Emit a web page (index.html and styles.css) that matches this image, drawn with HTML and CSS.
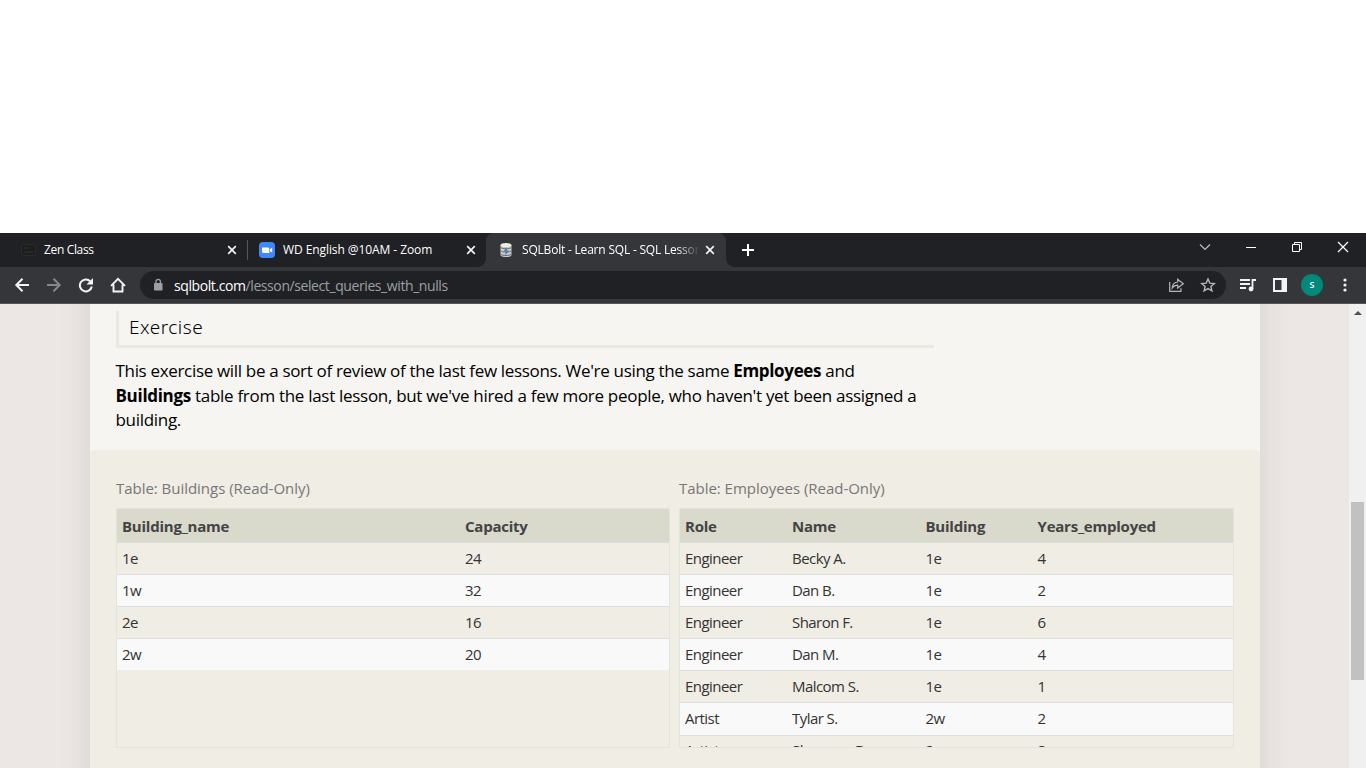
FILE: index.html
```html
<!DOCTYPE html>
<html lang="en">
<head>
<meta charset="utf-8">
<title>SQLBolt - Learn SQL</title>
<link rel="stylesheet" href="styles.css">
</head>
<body>
<div class="blank"></div>
<div class="tabstrip">
  <div class="tab tab-zen">
    <svg class="favicon" width="16" height="16" viewBox="0 0 16 16"><rect x=".5" y="2.500" width="14" height="11" rx="1" fill="#1e1e1f" stroke="#2b2b2c"/><path d="M3 6h5M3 10h9" stroke="#303031"/></svg>
    <span class="tab-title t-zen">Zen Class</span>
    <svg class="close" width="10" height="10" viewBox="0 0 10 10"><path d="M1.200 1.200l7.600 7.600M8.800 1.200l-7.600 7.600"/></svg>
  </div>
  <i class="divider"></i>
  <div class="tab tab-zoom">
    <svg class="favicon" width="16" height="16" viewBox="0 0 16 16"><rect width="16" height="16" rx="4" fill="#4087fc"/><path d="M3 5.500h6a1.500 1.500 0 0 1 1.300 1.500v4H4.500A1.500 1.500 0 0 1 3 9.500zM11 7.200l2.200-1.600v5L11 9.200z" fill="#fff"/></svg>
    <span class="tab-title t-zoom">WD English @10AM - Zoom</span>
    <svg class="close" width="10" height="10" viewBox="0 0 10 10"><path d="M1.200 1.200l7.600 7.600M8.800 1.200l-7.600 7.600"/></svg>
  </div>
  <div class="tab tab-sql">
    <svg class="favicon" width="14" height="16" viewBox="0 0 14 16"><path d="M1.500 3v10c0 2.800 11 2.800 11 0V3" fill="#c9c9c5"/><ellipse cx="7" cy="3" rx="5.500" ry="2" fill="#efede1"/><path d="M1.500 5.200c1 2 10 2 11 0M1.500 8.600c1 2 10 2 11 0M1.500 12c1 2 10 2 11 0" fill="none" stroke="#6b6d70" stroke-width="1"/><path d="M8 5L4.500 9.500H7L6 13.500 10 8.500H7.500z" fill="#4279b8"/></svg>
    <span class="tab-title t-sql">SQLBolt - Learn SQL - SQL Lesson</span>
    <svg class="close" width="10" height="10" viewBox="0 0 10 10"><path d="M1.200 1.200l7.600 7.600M8.800 1.200l-7.600 7.600"/></svg>
  </div>
  <svg class="plus" width="12" height="12" viewBox="0 0 12 12"><path d="M6 0v12M0 6h12" stroke="#fff" stroke-width="2"/></svg>
  <svg class="winctl" width="152" height="14" viewBox="0 0 152 14" fill="none" stroke="#fff"><path d="M1 4.500l5 5 5-5" stroke="#bdbdbd" stroke-width="1.200"/><path d="M47 7.500h10"/><path d="M93.500 4.500h7v7h-7zM95.500 4V2.500h7v7H101"/><path d="M139 2l10 10M149 2l-10 10" stroke-width="1.200"/></svg>
</div>
<div class="toolbar">
  <svg class="nav" width="112" height="16" viewBox="0 0 112 16" fill="none" stroke="#f1f3f4" stroke-width="2"><path d="M15 8H2.500M8.500 1.800L2.300 8l6.200 6.200"/><path d="M33 8h12.500M39.500 1.800L45.700 8l-6.200 6.200" stroke="#85878b"/><path d="M76.200 4.200A6 6 0 1 0 77.800 9.500"/><path d="M79 1v6.500h-6.500z" fill="#f1f3f4" stroke="none"/><path d="M97 8.800L104 1.800l7 7M99.500 7.500V14.500h9V7.500" stroke-width="1.900"/></svg>
  <div class="address">
    <svg width="10" height="14" viewBox="0 0 10 14"><rect x="1" y="5" width="8.500" height="7.500" rx=".8" fill="#9aa0a6"/><path d="M3 5.500V3.500a2.200 2.200 0 0 1 4.400 0v2" fill="none" stroke="#9aa0a6" stroke-width="1.300"/></svg>
    <span class="url"><b>sqlbolt.com</b>/lesson/select_queries_with_nulls</span>
    <svg class="share" width="48" height="16" viewBox="0 0 48 16" fill="none" stroke="#b4b7b9" stroke-width="1.200"><path d="M1.700 5v9.300h11.200v-3"/><path d="M4.200 11c.3-4 2-5.700 5.500-6V2.200L15.300 6.700l-5.600 4.300V8.200c-2.500 0-4.100.8-5.500 2.800z"/><path d="M40 2l1.800 4.100 4.500.4-3.400 3 1 4.400L40 11.600l-3.900 2.300 1-4.400-3.400-3 4.500-.4z" stroke-width="1.400"/></svg>
  </div>
  <svg class="media" width="16" height="16" viewBox="0 0 16 16"><path d="M0 3h10M0 7h10M0 11h6" stroke="#f1f3f4" stroke-width="1.800"/><path d="M12.500 12V3H16" fill="none" stroke="#f1f3f4" stroke-width="1.800"/><circle cx="11" cy="12" r="2.400" fill="#f1f3f4"/></svg>
  <svg class="panel" width="14" height="14" viewBox="0 0 14 14"><path fill-rule="evenodd" d="M0 0h14v14H0zM2 2v10h6.500V2z" fill="#f1f3f4"/></svg>
  <span class="avatar">S</span>
  <svg class="dots" width="4" height="14" viewBox="0 0 4 14" fill="#f1f3f4"><circle cx="2" cy="2" r="1.600"/><circle cx="2" cy="7" r="1.600"/><circle cx="2" cy="12" r="1.600"/></svg>
</div>
<div class="viewport">
  <main class="page">
    <section class="lesson">
      <h3>Exercise</h3>
      <p><span class="l1">This exercise will be a sort of review of the last few lessons. We're using the same <b>Employees</b> and</span><br><span class="l2"><b>Buildings</b> table from the last lesson, but we've hired a few more people, who haven't yet been assigned a</span><br><span class="l3">building.</span></p>
    </section>
    <section class="tables">
      <div class="col">
        <div class="caption">Table: Buildings (Read-Only)</div>
        <div class="grid buildings">
          <div class="row head"><span>Building_name</span><span>Capacity</span></div>
          <div class="row"><span>1e</span><span>24</span></div>
          <div class="row"><span>1w</span><span>32</span></div>
          <div class="row"><span>2e</span><span>16</span></div>
          <div class="row"><span>2w</span><span>20</span></div>
        </div>
      </div>
      <div class="col">
        <div class="caption">Table: Employees (Read-Only)</div>
        <div class="grid employees">
          <div class="row head"><span>Role</span><span>Name</span><span>Building</span><span>Years_employed</span></div>
          <div class="row"><span>Engineer</span><span>Becky A.</span><span>1e</span><span>4</span></div>
          <div class="row"><span>Engineer</span><span>Dan B.</span><span>1e</span><span>2</span></div>
          <div class="row"><span>Engineer</span><span>Sharon F.</span><span>1e</span><span>6</span></div>
          <div class="row"><span>Engineer</span><span>Dan M.</span><span>1e</span><span>4</span></div>
          <div class="row"><span>Engineer</span><span>Malcom S.</span><span>1e</span><span>1</span></div>
          <div class="row tall"><span>Artist</span><span>Tylar S.</span><span>2w</span><span>2</span></div>
          <div class="row partial"><span>Artist</span><span>Sherman D.</span><span>2w</span><span>8</span></div>
        </div>
      </div>
    </section>
  </main>
  <div class="scrollbar"><i class="up"></i><i class="thumb"></i></div>
</div>
</body>
</html>
```
FILE: styles.css
```css
* { box-sizing: border-box; }
body { margin: 0; width: 1366px; height: 768px; overflow: hidden; background: #fff; font-family: "Open Sans", "Noto Sans", sans-serif; }
svg { display: block; flex: none; }
.blank { height: 233px; }
.tabstrip { display: flex; height: 34px; background: #202124; color: #fff; font-size: 12px; }
.tab { display: flex; align-items: center; height: 34px; }
.tab-zen { width: 247px; padding-left: 21px; }
.tab-zoom { width: 238px; padding-left: 11px; }
.tab-sql { position: relative; width: 240px; padding-left: 13px; background: #35363a; border-radius: 8px 8px 0 0; }
.tab-sql::before, .tab-sql::after { content: ""; position: absolute; bottom: 0; width: 8px; height: 8px; }
.tab-sql::before { left: -8px; background: radial-gradient(circle at 0 0, #202124 7.5px, #35363a 8px); }
.tab-sql::after { right: -8px; background: radial-gradient(circle at 100% 0, #202124 7.5px, #35363a 8px); }
.tab-title { white-space: nowrap; overflow: hidden; padding-bottom: 1px; }
.t-zen { margin-left: 7px; width: 183px; letter-spacing: -.35px; }
.t-zoom { margin-left: 8px; width: 183px; letter-spacing: -.08px; }
.t-sql { margin-left: 9px; width: 176px; margin-right: 7px; letter-spacing: -.2px; -webkit-mask-image: linear-gradient(90deg, #000 155px, transparent 178px); }
.close { fill: none; stroke: #f1f3f4; stroke-width: 1.7; }
.divider { width: 1px; height: 20px; margin-top: 7px; background: #55565a; }
.plus { margin: 11px 0 0 16px; }
.winctl { margin: 7px 15px 0 auto; }
.toolbar { display: flex; align-items: center; height: 37px; padding: 0 19px 0 14px; background: #35363a; border-bottom: 1px solid #56555a; }
.address { display: flex; flex: none; align-items: center; width: 1086px; height: 28px; margin-left: 14px; padding: 0 10px 0 13px; border-radius: 14px; background: #202124; }
.url { margin-left: 11px; font-size: 14px; color: #9aa0a6; letter-spacing: -.41px; }
.url b { font-weight: 400; color: #fff; }
.share { margin-left: auto; }
.media { margin-left: 14px; }
.panel { margin-left: 17px; }
.avatar { flex: none; width: 22px; height: 22px; margin-left: 14px; border-radius: 50%; background: #00897b; color: #fff; font: 600 9px/22px "Open Sans", sans-serif; text-align: center; }
.dots { margin-left: 20px; }
.viewport { display: flex; height: 464px; background: #ece7e4; overflow: hidden; }
.page { width: 1170px; margin: -40px 0 -40px 90px; padding: 40px 0; background: #f6f5f1; box-shadow: 0 0 30px rgba(40, 45, 35, .11); }
.lesson { height: 146px; padding: 7px 0 0 26px; }
h3 { width: 818px; height: 37px; margin: 0; padding-left: 10px; border-left: 3px solid #e9e9de; border-bottom: 3px solid #e9e9de; color: #000; font-family: "Noto Sans", "Open Sans", sans-serif; font-size: 19px; line-height: 32px; font-weight: 300; letter-spacing: .5px; }
p { margin: 11px 0 0 -.5px; color: #000; font-size: 17px; line-height: 24.500px; white-space: nowrap; }
p b { font-weight: 700; }
.l1 { letter-spacing: -.325px; }
.l2, .l3 { letter-spacing: -.3px; }
.tables { display: flex; gap: 9px; height: 318px; padding: 27px 26px 0; background: #efede4; border-radius: 4px 4px 0 0; }
.col { width: 554px; flex: none; }
.col + .col { width: 555px; }
.caption { height: 31px; color: #777; font-size: 15px; line-height: 22px; letter-spacing: -.03px; white-space: nowrap; }
.grid { height: 240px; border: 1px solid #e3e4dc; overflow: hidden; color: #333; font-size: 15px; }
.row { display: grid; height: 32px; line-height: 31px; padding-left: 5px; border-bottom: 1px solid #dcdddd; letter-spacing: -.55px; white-space: nowrap; }
.row:nth-child(odd) { background: #f9f9f9; }
.row.head { height: 34px; line-height: 35px; background: #d9d9cc; color: #444; font-weight: 700; letter-spacing: -.23px; }
.row.tall { height: 33px; }
.row.partial { line-height: 29px; background: #efede4; }
.buildings .row { grid-template-columns: 343px 1fr; }
.buildings .row:last-child { height: 31px; border: 0; }
.employees .row { grid-template-columns: 107px 133.500px 112px 1fr; }
.scrollbar { width: 17px; margin-left: 89px; background: #f0f0f0; position: relative; z-index: 1; padding: 7px 0 0 2px; }
.up { display: block; margin-left: 3px; width: 0; border: 4px solid transparent; border-top: 0; border-bottom: 4px solid #505050; }
.thumb { display: block; width: 13px; height: 178px; margin-top: 187px; background: #c1c1c1; }
```
